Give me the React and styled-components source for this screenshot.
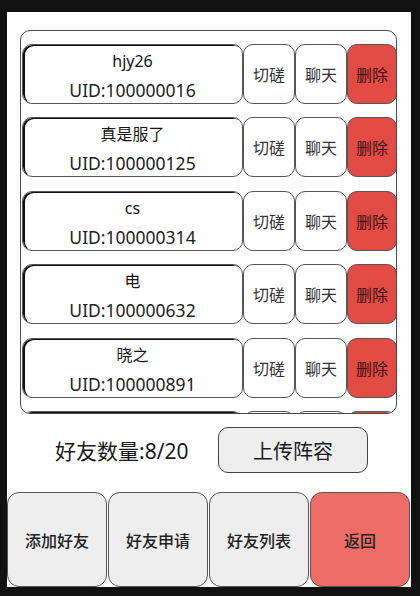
import React from 'react';
import styled, { createGlobalStyle } from 'styled-components';

const friends = [
  { name: 'hjy26', uid: '100000016' },
  { name: '真是服了', uid: '100000125' },
  { name: 'cs', uid: '100000314' },
  { name: '电', uid: '100000632' },
  { name: '晓之', uid: '100000891' },
  { name: '阿北', uid: '100000977' },
  { name: '小七', uid: '100001024' },
  { name: 'lin', uid: '100001100' },
];

const GlobalStyle = createGlobalStyle`
  html, body {
    margin: 0;
    padding: 0;
    background: #111111;
  }
  body {
    font-family: "Noto Sans", "Noto Sans CJK SC", sans-serif;
  }
`;

const Screen = styled.div`
  width: 420px;
  height: 596px;
  background: #111111;
  display: flex;
  flex-direction: column;
  padding: 12px 9px 9px 7px;
  box-sizing: border-box;
`;

const Panel = styled.div`
  flex: 1;
  background: #ffffff;
  display: flex;
  flex-direction: column;
`;

const FriendList = styled.div`
  margin: 18px 14px 0 13px;
  height: 384px;
  box-sizing: border-box;
  border: 1px solid #4a4a4a;
  border-radius: 10px;
  overflow: hidden;
  padding: 13px 0 0 1px;
  display: flex;
  flex-direction: column;
  gap: 13.4px;
`;

const Row = styled.div`
  flex: 0 0 60px;
  height: 60px;
  min-height: 0;
  display: grid;
  grid-template-columns: 221px 52px 52px 50px;
  grid-template-rows: 60px;
`;

const NameCard = styled.div`
  box-sizing: border-box;
  border: 1px solid #555;
  border-radius: 10px;
  box-shadow: inset 2px 1px 0 #111;
  display: flex;
  flex-direction: column;
  align-items: center;
  justify-content: center;
  padding-top: 4px;
  color: #151515;
  font-size: 16px;
  line-height: 29px;
`;

const Uid = styled.span`
  font-size: 17.5px;
  color: #222;
`;

const RowButton = styled.div`
  box-sizing: border-box;
  border: 1px solid #555;
  border-radius: 10px;
  display: flex;
  align-items: center;
  justify-content: center;
  font-family: "Noto Sans CJK SC", sans-serif;
  font-size: 16px;
  color: ${(p) => (p.$danger ? '#3a1210' : '#333')};
  background: ${(p) => (p.$danger ? '#e24c45' : '#fff')};
`;

const StatusBar = styled.div`
  height: 78px;
  display: flex;
  align-items: center;
  padding: 0 0 6px 48px;
  box-sizing: border-box;
`;

const Count = styled.span`
  font-family: "Noto Sans", "Noto Sans CJK SC", sans-serif;
  font-size: 21px;
  color: #1a1a1a;
  width: 163px;
`;

const UploadButton = styled.div`
  width: 150px;
  height: 46px;
  box-sizing: border-box;
  border: 1px solid #444;
  border-radius: 10px;
  background: #eeeeee;
  display: flex;
  align-items: center;
  justify-content: center;
  font-family: "Noto Sans CJK SC", sans-serif;
  font-size: 20px;
  color: #1a1a1a;
`;

const NavBar = styled.div`
  flex: 1;
  display: grid;
  grid-template-columns: repeat(4, 1fr);
  gap: 1px;
  padding-right: 1px;
`;

const NavButton = styled.div`
  box-sizing: border-box;
  border: 1px solid #555;
  border-radius: 12px;
  background: ${(p) => (p.$back ? '#ee6e67' : '#eeeeee')};
  display: flex;
  align-items: center;
  justify-content: center;
  font-family: "Noto Sans CJK SC", sans-serif;
  font-size: 16px;
  font-weight: 500;
  color: #222;
`;

const App = () => (
  <Screen>
    <GlobalStyle />
    <Panel>
      <FriendList>
        {friends.map((f) => (
          <Row key={f.uid}>
            <NameCard>
              <span>{f.name}</span>
              <Uid>UID:{f.uid}</Uid>
            </NameCard>
            <RowButton>切磋</RowButton>
            <RowButton>聊天</RowButton>
            <RowButton $danger>删除</RowButton>
          </Row>
        ))}
      </FriendList>
      <StatusBar>
        <Count>好友数量:8/20</Count>
        <UploadButton>上传阵容</UploadButton>
      </StatusBar>
      <NavBar>
        <NavButton>添加好友</NavButton>
        <NavButton>好友申请</NavButton>
        <NavButton>好友列表</NavButton>
        <NavButton $back>返回</NavButton>
      </NavBar>
    </Panel>
  </Screen>
);

export default App;
